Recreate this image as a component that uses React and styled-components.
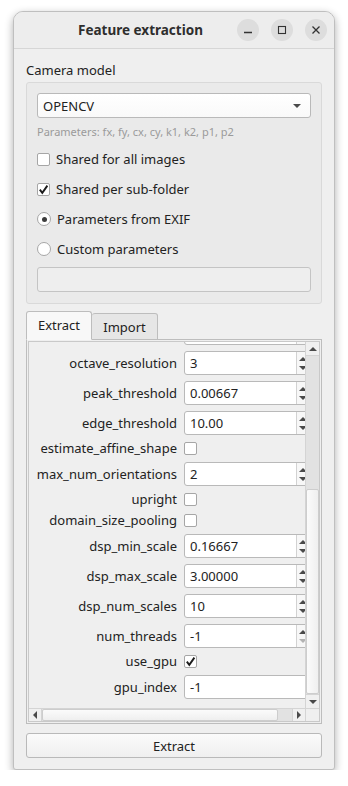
import React, { useLayoutEffect, useRef } from "react";
import styled, { createGlobalStyle, css } from "styled-components";

const GlobalStyle = createGlobalStyle`
  html, body {
    margin: 0;
    padding: 0;
    background: #ffffff;
  }
  body {
    font-family: "Noto Sans", "DejaVu Sans", sans-serif;
    font-size: 13px;
    color: #222222;
  }
  * {
    box-sizing: border-box;
  }
`;

// rows above num_octaves are scrolled out of view in the screenshot
const siftOptions = [
  { label: "num_octaves", type: "spin", value: "4" },
  { label: "octave_resolution", type: "spin", value: "3" },
  { label: "peak_threshold", type: "spin", value: "0.00667" },
  { label: "edge_threshold", type: "spin", value: "10.00" },
  { label: "estimate_affine_shape", type: "check", checked: false },
  { label: "max_num_orientations", type: "spin", value: "2" },
  { label: "upright", type: "check", checked: false },
  { label: "domain_size_pooling", type: "check", checked: false },
  { label: "dsp_min_scale", type: "spin", value: "0.16667" },
  { label: "dsp_max_scale", type: "spin", value: "3.00000" },
  { label: "dsp_num_scales", type: "spin", value: "10" },
  { label: "num_threads", type: "spin", value: "-1", downDisabled: true },
  { label: "use_gpu", type: "check", checked: true },
  { label: "gpu_index", type: "line", value: "-1" },
];

const cameraOptions = [
  { kind: "check", label: "Shared for all images", on: false },
  { kind: "check", label: "Shared per sub-folder", on: true },
  { kind: "radio", label: "Parameters from EXIF", on: true },
  { kind: "radio", label: "Custom parameters", on: false },
];

const CheckMark = () => (
  <svg width="11" height="11" viewBox="0 0 11 11">
    <path d="M1.8 5.6 L4.3 8.8 L9.4 1.6" fill="none" stroke="#1c1c1c" strokeWidth="1.9" />
  </svg>
);

const Arrow = ({ dir, $muted }) => {
  const pts = {
    up: "0,5 4,1 8,5",
    down: "0,1 4,5 8,1",
    left: "5,0 1,4 5,8",
    right: "1,0 5,4 1,8",
  }[dir];
  const vertical = dir === "up" || dir === "down";
  return (
    <svg width={vertical ? 8 : 6} height={vertical ? 6 : 8} viewBox={vertical ? "0 0 8 6" : "0 0 6 8"}>
      <polygon points={pts} fill={$muted ? "#b3b3b3" : "#4a4a4a"} />
    </svg>
  );
};

const App = () => {
  const viewRef = useRef(null);

  useLayoutEffect(() => {
    const el = viewRef.current;
    if (el) {
      el.scrollTop = el.scrollHeight;
      el.scrollLeft = 0;
    }
  }, []);

  return (
    <>
      <GlobalStyle />
      <Page>
        <Window>
          <TitleBar>
            <Title>Feature extraction</Title>
            <WinButton>
              <svg width="10" height="10" viewBox="0 0 10 10">
                <line x1="1" y1="7.5" x2="9" y2="7.5" stroke="#333" strokeWidth="1.3" />
              </svg>
            </WinButton>
            <WinButton>
              <svg width="10" height="10" viewBox="0 0 10 10">
                <rect x="1.5" y="1.5" width="7" height="7" fill="none" stroke="#333" strokeWidth="1.1" />
              </svg>
            </WinButton>
            <WinButton>
              <svg width="10" height="10" viewBox="0 0 10 10">
                <path d="M1.5 1.5 L8.5 8.5 M8.5 1.5 L1.5 8.5" stroke="#333" strokeWidth="1.3" />
              </svg>
            </WinButton>
          </TitleBar>

          <Body>
            <SectionLabel>Camera model</SectionLabel>
            <GroupBox>
              <Combo>
                <span>OPENCV</span>
                <Arrow dir="down" />
              </Combo>
              <Hint>Parameters: fx, fy, cx, cy, k1, k2, p1, p2</Hint>
              <OptionList>
                {cameraOptions.map((opt) => (
                  <OptionRow key={opt.label}>
                    {opt.kind === "check" ? (
                      <CheckBox>{opt.on && <CheckMark />}</CheckBox>
                    ) : (
                      <Radio $on={opt.on} />
                    )}
                    <OptionText>{opt.label}</OptionText>
                  </OptionRow>
                ))}
              </OptionList>
              <LineEdit />
            </GroupBox>

            <TabBar>
              <Tab $active>Extract</Tab>
              <Tab>Import</Tab>
            </TabBar>
            <TabPanel>
              <ScrollArea>
                <Viewport ref={viewRef}>
                  <FormGrid>
                    {siftOptions.map((opt) => (
                      <React.Fragment key={opt.label}>
                        <FieldLabel>{opt.label}</FieldLabel>
                        {opt.type === "check" ? (
                          <FieldCell $check>
                            <CheckBox>{opt.checked && <CheckMark />}</CheckBox>
                          </FieldCell>
                        ) : (
                          <FieldCell>
                            <SpinBox>
                              <SpinValue>{opt.value}</SpinValue>
                              {opt.type === "spin" && (
                                <SpinButtons>
                                  <Arrow dir="up" />
                                  <Arrow dir="down" $muted={opt.downDisabled} />
                                </SpinButtons>
                              )}
                            </SpinBox>
                          </FieldCell>
                        )}
                      </React.Fragment>
                    ))}
                  </FormGrid>
                </Viewport>

                <VScroll>
                  <ScrollButton $v>
                    <Arrow dir="up" />
                  </ScrollButton>
                  <Groove $v>
                    <GrooveGap style={{ flexGrow: 135 }} />
                    <Thumb $v style={{ flexGrow: 205 }} />
                  </Groove>
                  <ScrollButton $v>
                    <Arrow dir="down" />
                  </ScrollButton>
                </VScroll>

                <HScroll>
                  <ScrollButton>
                    <Arrow dir="left" />
                  </ScrollButton>
                  <Groove>
                    <Thumb style={{ flexGrow: 238 }} />
                    <GrooveGap style={{ flexGrow: 14 }} />
                  </Groove>
                  <ScrollButton>
                    <Arrow dir="right" />
                  </ScrollButton>
                </HScroll>
                <Corner />
              </ScrollArea>
            </TabPanel>

            <PushButton>Extract</PushButton>
          </Body>
        </Window>
      </Page>
    </>
  );
};

const Page = styled.div`
  padding: 11px 0 0 13px;
`;

const Window = styled.div`
  width: 322px;
  height: 759px;
  display: flex;
  flex-direction: column;
  background: #efefef;
  border: 1px solid #bfbfbf;
  border-radius: 10px 10px 3px 3px;
  box-shadow: 0 3px 9px rgba(0, 0, 0, 0.32);
  overflow: hidden;
`;

const TitleBar = styled.div`
  height: 37px;
  flex-shrink: 0;
  display: flex;
  align-items: center;
  padding-right: 7px;
  background: #ededed;
  border-bottom: 1px solid #d6d6d6;
`;

const Title = styled.div`
  flex: 1;
  text-align: center;
  padding-left: 42px;
  font-weight: 700;
  font-size: 13.5px;
  color: #2e2e2e;
`;

const WinButton = styled.div`
  width: 22px;
  height: 22px;
  margin-left: 12px;
  border-radius: 50%;
  background: #dddddd;
  display: flex;
  align-items: center;
  justify-content: center;
`;

const Body = styled.div`
  flex: 1;
  min-height: 0;
  display: flex;
  flex-direction: column;
  padding: 12px 12px 11px 12px;
`;

const SectionLabel = styled.div`
  height: 18px;
  line-height: 18px;
  margin-bottom: 3px;
`;

const GroupBox = styled.div`
  display: flex;
  flex-direction: column;
  padding: 10px 10px 11px 10px;
  background: #eaeaea;
  border: 1px solid #d9d9d9;
  border-radius: 3px;
`;

const fieldFrame = css`
  height: 25px;
  background: #ffffff;
  border: 1px solid #b9b9b9;
  border-radius: 3px;
`;

const Combo = styled.div`
  ${fieldFrame};
  display: flex;
  align-items: center;
  justify-content: space-between;
  padding: 0 9px 0 5px;
  background: linear-gradient(#ffffff, #f9f9f9);
`;

const Hint = styled.div`
  margin-top: 7px;
  height: 14px;
  line-height: 14px;
  font-size: 11px;
  color: #9a9a9a;
`;

const OptionList = styled.div`
  display: flex;
  flex-direction: column;
  gap: 12px;
  margin-top: 11px;
`;

const OptionRow = styled.div`
  height: 18px;
  line-height: 18px;
  display: flex;
  align-items: center;
`;

const CheckBox = styled.div`
  width: 13px;
  height: 13px;
  flex-shrink: 0;
  background: #ffffff;
  border: 1px solid #a6a6a6;
  border-radius: 2px;
  display: flex;
  align-items: center;
  justify-content: center;
`;

const Radio = styled.div`
  width: 14px;
  height: 14px;
  flex-shrink: 0;
  border-radius: 50%;
  background: #ffffff;
  border: 1px solid #a6a6a6;
  display: flex;
  align-items: center;
  justify-content: center;
  &::after {
    content: "";
    width: 5px;
    height: 5px;
    border-radius: 50%;
    background: ${(p) => (p.$on ? "#3c3c3c" : "transparent")};
  }
`;

const OptionText = styled.span`
  margin-left: 6px;
  font-size: 13px;
`;

const LineEdit = styled.div`
  ${fieldFrame};
  margin-top: 9px;
  background: #eeeeee;
  border-color: #c4c4c4;
`;

const TabBar = styled.div`
  display: flex;
  align-items: flex-end;
  height: 29px;
  margin-top: 7px;
  margin-bottom: -1px;
  position: relative;
  z-index: 1;
`;

const Tab = styled.div`
  width: 66px;
  height: ${(p) => (p.$active ? "29px" : "27px")};
  line-height: 18px;
  display: flex;
  align-items: center;
  justify-content: center;
  padding-bottom: ${(p) => (p.$active ? "2px" : "0")};
  background: ${(p) => (p.$active ? "#f8f8f8" : "#e6e6e6")};
  border: 1px solid #bdbdbd;
  border-bottom: ${(p) => (p.$active ? "1px solid #f8f8f8" : "1px solid #bdbdbd")};
  border-left-width: ${(p) => (p.$active ? "1px" : "0")};
  border-radius: 3px 3px 0 0;
`;

const TabPanel = styled.div`
  flex: 1;
  min-height: 0;
  display: flex;
  padding: 1px;
  background: #efefef;
  border: 1px solid #bdbdbd;
`;

const ScrollArea = styled.div`
  flex: 1;
  min-width: 0;
  display: grid;
  grid-template-columns: minmax(0, 1fr) 14px;
  grid-template-rows: minmax(0, 1fr) 13px;
  border: 1px solid #c9c9c9;
`;

const Viewport = styled.div`
  overflow: hidden;
  background: #efefef;
`;

const FormGrid = styled.div`
  display: grid;
  grid-template-columns: 141px 125px;
  column-gap: 7px;
  row-gap: 6px;
  width: 294px;
  padding: 8px 14px 9px 7px;
`;

const FieldLabel = styled.div`
  text-align: right;
  white-space: nowrap;
  align-self: center;
  line-height: 15px;
  font-size: 13px;
`;

const FieldCell = styled.div`
  height: ${(p) => (p.$check ? "15px" : "24px")};
  display: flex;
  align-items: center;
`;

const SpinBox = styled.div`
  ${fieldFrame};
  width: 125px;
  height: 24px;
  display: flex;
  align-items: stretch;
`;

const SpinValue = styled.div`
  flex: 1;
  display: flex;
  align-items: center;
  padding-left: 5px;
`;

const SpinButtons = styled.div`
  width: 12px;
  display: flex;
  flex-direction: column;
  align-items: center;
  justify-content: center;
  gap: 3px;
  border-left: 1px solid #d2d2d2;
  background: #f7f7f7;
`;

const VScroll = styled.div`
  display: flex;
  flex-direction: column;
  background: #e4e4e4;
  border-left: 1px solid #d4d4d4;
`;

const HScroll = styled.div`
  display: flex;
  background: #e4e4e4;
  border-top: 1px solid #d4d4d4;
`;

const ScrollButton = styled.div`
  flex-shrink: 0;
  width: ${(p) => (p.$v ? "auto" : "13px")};
  height: ${(p) => (p.$v ? "14px" : "auto")};
  display: flex;
  align-items: center;
  justify-content: center;
  background: #f0f0f0;
  border-${(p) => (p.$v ? "bottom" : "right")}: 1px solid #d4d4d4;
  &:last-child {
    border-${(p) => (p.$v ? "bottom" : "right")}: none;
    border-${(p) => (p.$v ? "top" : "left")}: 1px solid #d4d4d4;
  }
`;

const Groove = styled.div`
  flex: 1;
  display: flex;
  flex-direction: ${(p) => (p.$v ? "column" : "row")};
  background: #e2e2e2;
`;

const GrooveGap = styled.div`
  flex-basis: 0;
`;

const Thumb = styled.div`
  flex-basis: 0;
  background: ${(p) =>
    p.$v
      ? "linear-gradient(to right, #fbfbfb, #efefef)"
      : "linear-gradient(#fbfbfb, #efefef)"};
  border: 1px solid #cdcdcd;
  border-radius: 2px;
`;

const Corner = styled.div`
  background: #efefef;
  border-left: 1px solid #d4d4d4;
  border-top: 1px solid #d4d4d4;
`;

const PushButton = styled.div`
  margin-top: 9px;
  height: 25px;
  flex-shrink: 0;
  display: flex;
  align-items: center;
  justify-content: center;
  background: linear-gradient(#fbfbfb, #efefef);
  border: 1px solid #b9b9b9;
  border-radius: 3px;
`;

export default App;
